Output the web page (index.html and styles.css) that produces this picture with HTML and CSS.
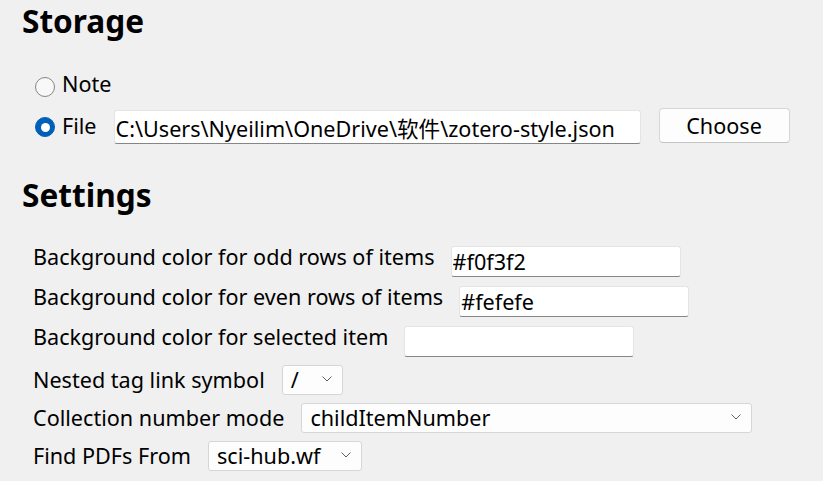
FILE: index.html
```html
<!DOCTYPE html>
<html>
<head>
<meta charset="utf-8">
<title>Zotero Style Preferences</title>
<link rel="stylesheet" href="styles.css">
</head>
<body>
<div class="page">
  <h1 class="heading">Storage</h1>
  <div class="radio-group">
    <div class="radio-row note-row">
      <span class="radio"></span>
      <span class="radio-label">Note</span>
    </div>
    <div class="radio-row file-row">
      <span class="radio checked"></span>
      <span class="radio-label file-label">File</span>
      <input class="text-input path-input" type="text" value="C:\Users\Nyeilim\OneDrive\软件\zotero-style.json">
      <button class="btn">Choose</button>
    </div>
  </div>

  <h1 class="heading settings-heading">Settings</h1>
  <div class="rows">
    <div class="crow">
      <span class="label">Background color for odd rows of items</span>
      <input class="text-input color-input" type="text" value="#f0f3f2">
    </div>
    <div class="crow">
      <span class="label">Background color for even rows of items</span>
      <input class="text-input color-input" type="text" value="#fefefe">
    </div>
    <div class="crow last">
      <span class="label">Background color for selected item</span>
      <input class="text-input color-input" type="text" value="">
    </div>
    <div class="srow">
      <span class="label">Nested tag link symbol</span>
      <div class="select select-slash"><span class="select-value">/</span><svg class="chevron" width="10" height="6" viewBox="0 0 10 6"><polyline points="0.5,0.5 5,5 9.5,0.5"/></svg></div>
    </div>
    <div class="srow">
      <span class="label">Collection number mode</span>
      <div class="select select-mode"><span class="select-value">childItemNumber</span><svg class="chevron" width="10" height="6" viewBox="0 0 10 6"><polyline points="0.5,0.5 5,5 9.5,0.5"/></svg></div>
    </div>
    <div class="srow">
      <span class="label">Find PDFs From</span>
      <div class="select select-pdf"><span class="select-value">sci-hub.wf</span><svg class="chevron" width="10" height="6" viewBox="0 0 10 6"><polyline points="0.5,0.5 5,5 9.5,0.5"/></svg></div>
    </div>
  </div>
</div>
</body>
</html>
```
FILE: styles.css
```css
html, body {
  margin: 0;
  padding: 0;
}
body {
  background: #f0f0f0;
  font-family: "Noto Sans", "Noto Sans CJK SC", sans-serif;
  font-size: 21.6px;
  color: #000;
}
.page {
  width: 823px;
  height: 481px;
  overflow: hidden;
}
.heading {
  font-size: 31.6px;
  font-weight: 700;
  line-height: 40px;
  margin: 1px 0 0;
  padding-left: 22px;
}
.settings-heading {
  margin-top: 31px;
}
.radio-group {
  margin-top: 32px;
  padding-left: 31px;
}
.radio-row {
  display: flex;
  align-items: flex-start;
}
.note-row {
  height: 35px;
}
.radio {
  flex: none;
  box-sizing: border-box;
  width: 20px;
  height: 20px;
  border-radius: 50%;
  border: 1px solid #858585;
  background: #f8f8f8;
  margin: 4px 7px 0 4px;
}
.radio.checked {
  margin-top: 9px;
  background: #005fb8;
  border-color: #005fb8;
  display: flex;
  align-items: center;
  justify-content: center;
}
.radio.checked::after {
  content: "";
  width: 9px;
  height: 9px;
  border-radius: 50%;
  background: #fff;
}
.radio-label {
  line-height: 22px;
  white-space: nowrap;
}
.file-label {
  margin-top: 6.6px;
}
.text-input {
  box-sizing: border-box;
  margin: 0;
  padding: 0 1px;
  border: 1px solid #e4e4e4;
  border-bottom-color: #868686;
  border-radius: 3px;
  background: #fff;
  font: inherit;
  color: #000;
  outline: none;
}
.path-input {
  margin: 2px 0 0 17px;
  width: 527px;
  height: 34px;
}
.btn {
  box-sizing: border-box;
  width: 131px;
  height: 35px;
  margin: 0 0 0 18px;
  padding: 0;
  border: 1px solid #d6d6d6;
  border-bottom-color: #c4c4c4;
  border-radius: 4px;
  background: #fdfdfd;
  font: inherit;
  color: #000;
}
.rows {
  margin-top: 30.6px;
  padding-left: 33px;
}
.label {
  line-height: 22px;
  margin-right: 16px;
  white-space: nowrap;
}
.crow {
  display: flex;
  align-items: flex-start;
  height: 31px;
  margin-bottom: 9px;
}
.crow.last {
  margin-bottom: 8px;
}
.color-input {
  width: 230px;
  height: 31px;
}
.srow {
  display: flex;
  align-items: center;
  height: 30px;
  margin-bottom: 8px;
}
.select {
  box-sizing: border-box;
  height: 30px;
  margin-left: 1px;
  padding: 0 10px 0 8px;
  border: 1px solid #d6d6d6;
  border-radius: 3px;
  background: #fdfdfd;
  display: flex;
  align-items: center;
  justify-content: space-between;
}
.select-value {
  line-height: 22px;
  white-space: nowrap;
}
.select-slash { width: 61px; }
.select-mode { width: 451px; }
.select-pdf { width: 154px; }
.chevron {
  flex: none;
  margin-top: -1px;
}
.chevron polyline {
  fill: none;
  stroke: #606060;
  stroke-width: 1;
}
```
